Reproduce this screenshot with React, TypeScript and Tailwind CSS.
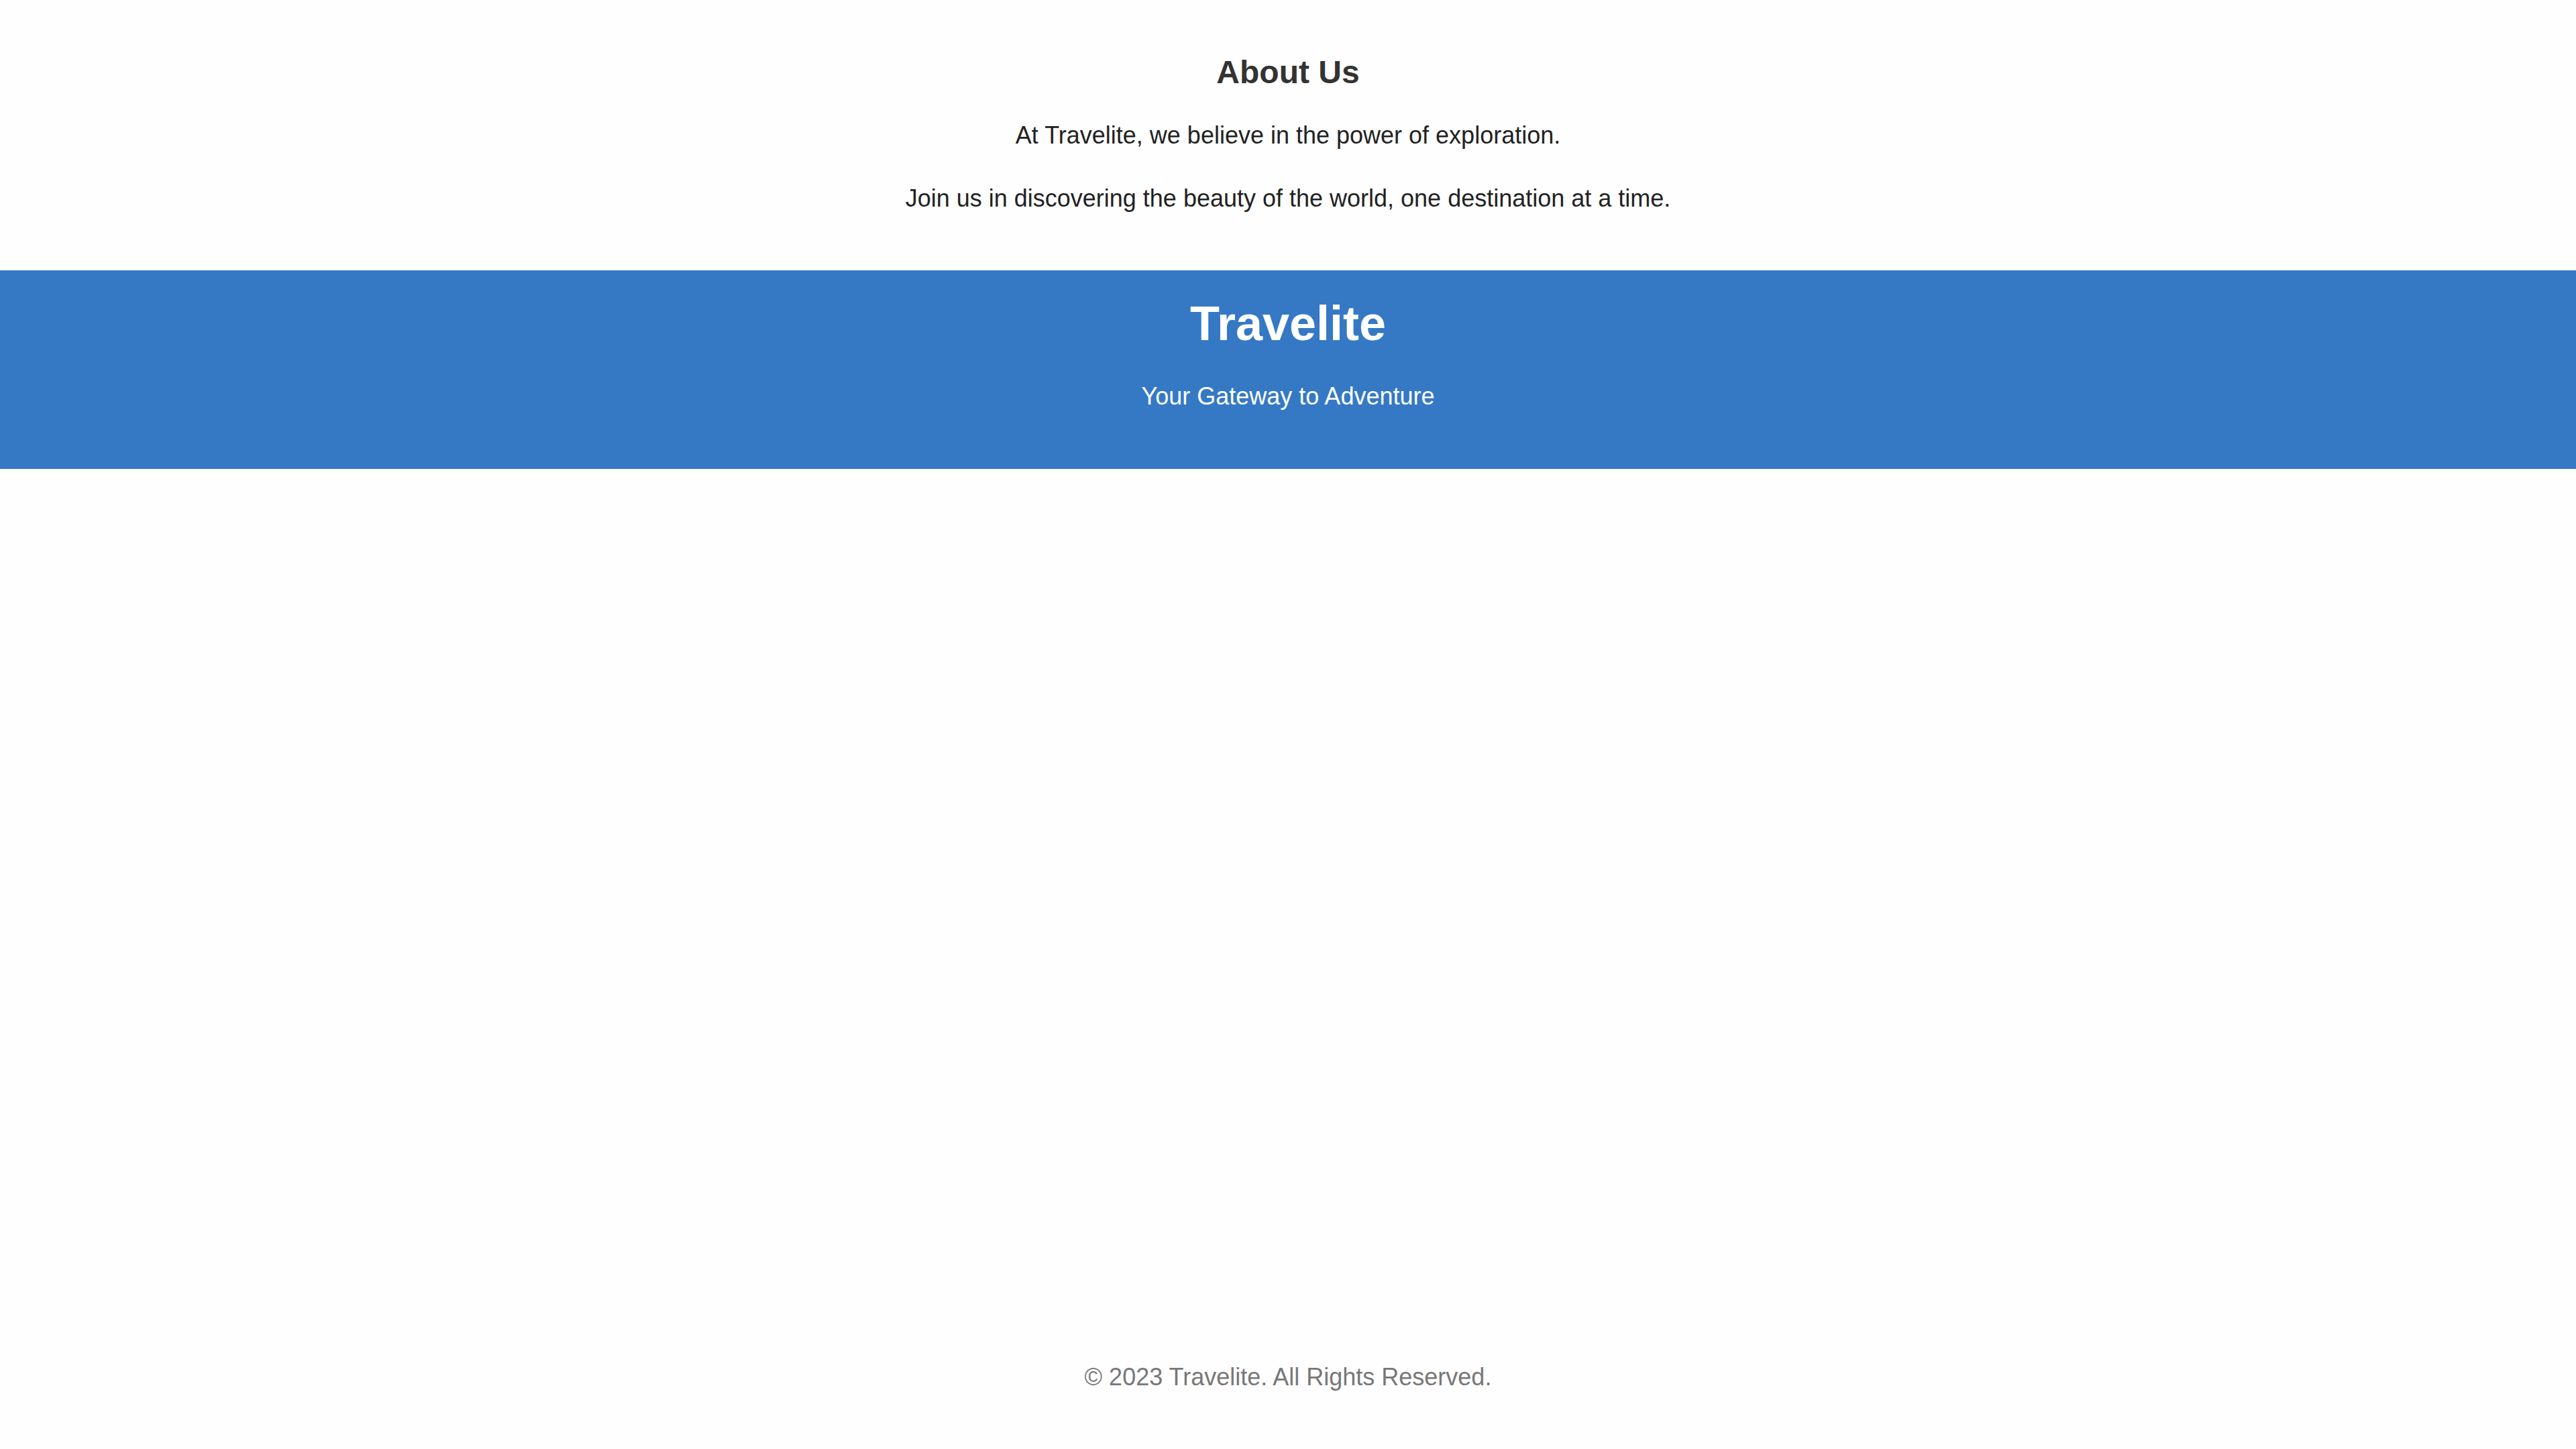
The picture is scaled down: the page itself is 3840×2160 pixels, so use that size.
export default function App() {
  return (
    <div className="flex min-h-screen flex-col bg-[#fefefe] font-['Liberation_Sans',Arial,sans-serif]">
      <section className="flex flex-col items-center px-8 pt-[80px] pb-[87px] text-center">
        <h2 className="text-[48px] font-bold leading-[56px] text-[#333333]">About Us</h2>
        <p className="mt-[45px] text-[36px] leading-[41px] text-[#222222]">
          At Travelite, we believe in the power of exploration.
        </p>
        <p className="mt-[53px] text-[36px] leading-[41px] text-[#222222]">
          Join us in discovering the beauty of the world, one destination at a time.
        </p>
      </section>

      <header className="flex flex-col items-center bg-[#3579c5] pt-[38px] pb-[88px] text-center text-white">
        <h1 className="text-[72px] font-bold leading-[83px]">Travelite</h1>
        <p className="mt-[46px] text-[36px] leading-[41px]">Your Gateway to Adventure</p>
      </header>

      <main className="flex-1" />

      <footer className="pb-[87px] text-center">
        <p className="text-[36px] leading-[41px] text-[#777777]">© 2023 Travelite. All Rights Reserved.</p>
      </footer>
    </div>
  );
}
